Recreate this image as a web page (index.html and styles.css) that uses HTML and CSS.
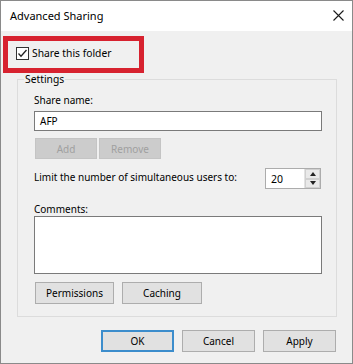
FILE: index.html
```html
<!DOCTYPE html>
<html>
<head>
<meta charset="utf-8">
<link rel="stylesheet" href="styles.css">
</head>
<body>
<div class="window">
  <div class="titlebar">
    <span class="title">Advanced Sharing</span>
    <svg class="close" width="11" height="11" viewBox="0 0 11 11"><path d="M0.5 0.5 L10.5 10.5 M10.5 0.5 L0.5 10.5" stroke="#1a1a1a" stroke-width="1.1" fill="none"/></svg>
  </div>
  <div class="content">
    <div class="highlight">
      <svg class="check" width="13" height="13" viewBox="0 0 13 13"><rect x="0.5" y="0.5" width="12" height="12" fill="#fff" stroke="#333"/><path d="M2.5 6.5 L5 9.2 L10.5 3" stroke="#222" stroke-width="1.3" fill="none"/></svg>
      <span class="checklabel">Share this folder</span>
    </div>
    <fieldset class="group">
      <legend>Settings</legend>
      <div class="label first">Share name:</div>
      <div class="textbox">AFP</div>
      <div class="btnrow small">
        <div class="btn disabled w62">Add</div>
        <div class="btn disabled w62">Remove</div>
      </div>
      <div class="limitrow">
        <span class="limittext">Limit the number of simultaneous users to:</span>
        <div class="spinner">
          <span class="spinval">20</span>
          <div class="spinbtns">
            <div class="spinup"><i class="up"></i></div>
            <div class="spindown"><i class="down"></i></div>
          </div>
        </div>
      </div>
      <div class="label comments">Comments:</div>
      <div class="textarea"></div>
      <div class="btnrow lower">
        <div class="btn w79">Permissions</div>
        <div class="btn w80">Caching</div>
      </div>
    </fieldset>
    <div class="footer">
      <div class="btn fbtn default">OK</div>
      <div class="btn fbtn">Cancel</div>
      <div class="btn fbtn">Apply</div>
    </div>
  </div>
</div>
</body>
</html>
```
FILE: styles.css
```css
* { box-sizing: border-box; }
html, body { margin: 0; padding: 0; background: #fff; }
body {
  font-family: "Noto Sans", "Open Sans", sans-serif;
  font-size: 10px;
  color: #000;
}
.window {
  width: 353px;
  height: 364px;
  border: 1px solid #8a8a8a;
  background: #f0f0f0;
  display: flex;
  flex-direction: column;
}
.titlebar {
  height: 30px;
  background: #fff;
  display: flex;
  align-items: center;
  justify-content: space-between;
  padding: 0 8px 0 9px;
  flex: none;
}
.title { font-size: 11px; line-height: 14px; }
.close { display: block; margin-top: -1px; }
.content {
  flex: 1;
  display: flex;
  flex-direction: column;
  padding-top: 5px;
}
.highlight {
  margin-left: 2px;
  width: 141px;
  height: 37px;
  border: 5px solid #d7222f;
  display: flex;
  align-items: flex-start;
  padding: 6px 0 0 8px;
}
.check { display: block; flex: none; }
.checklabel { margin-left: 3px; line-height: 13px; font-size: 10.3px; }
.group {
  margin: 0 0 0 16px;
  width: 320px;
  border: 1px solid #dcdcdc;
  padding: 0 14px 12px 16px;
  min-width: 0;
}
.group legend {
  padding: 0 1px;
  margin-left: -10px;
  line-height: 12px;
  font-size: 10.3px;
}
.label { line-height: 14px; }
.label.first { margin-top: 8px; }
.textbox {
  margin-top: 4px;
  height: 20px;
  border: 1px solid #7a7a7a;
  background: #fff;
  padding-left: 5px;
  line-height: 18px;
}
.btnrow { display: flex; gap: 2px; }
.btnrow.small { margin-top: 7px; padding-left: 1px; }
.btnrow.lower { margin-top: 8px; padding-left: 1px; gap: 8px; }
.btn {
  height: 21px;
  border: 1px solid #adadad;
  background: #e1e1e1;
  display: flex;
  align-items: center;
  justify-content: center;
  line-height: 14px;
}
.btn.disabled {
  background: #cccccc;
  border-color: #c4c4c4;
  color: #a0a0a0;
}
.w62 { width: 62px; }
.w79 { width: 79px; height: 22px; }
.w80 { width: 80px; height: 22px; }
.limitrow {
  margin-top: 9px;
  display: flex;
  align-items: center;
  justify-content: space-between;
  padding-right: 1px;
}
.limittext { margin-top: -3px; }
.spinner {
  width: 56px;
  height: 21px;
  border: 1px solid #acacac;
  background: #fff;
  display: flex;
  align-items: center;
  justify-content: space-between;
}
.spinval { padding-left: 5px; font-size: 10.5px; }
.spinbtns {
  width: 16px;
  height: 19px;
  display: flex;
  flex-direction: column;
  border-left: 1px solid #e3e3e3;
}
.spinup, .spindown {
  flex: 1;
  background: #e9e9e9;
  border: 1px solid #d0d0d0;
  display: flex;
  align-items: center;
  justify-content: center;
}
.up {
  width: 0; height: 0;
  border-left: 3px solid transparent;
  border-right: 3px solid transparent;
  border-bottom: 4px solid #222;
}
.down {
  width: 0; height: 0;
  border-left: 3px solid transparent;
  border-right: 3px solid transparent;
  border-top: 4px solid #222;
}
.label.comments { margin-top: 13px; }
.textarea {
  height: 58px;
  border: 1px solid #7a7a7a;
  background: #fff;
}
.footer {
  margin-top: 13px;
  display: flex;
  justify-content: flex-end;
  gap: 8px;
  padding-right: 16px;
}
.fbtn { width: 73px; height: 22px; }
.fbtn.default { border: 2px solid #3c8dcc; }
```
